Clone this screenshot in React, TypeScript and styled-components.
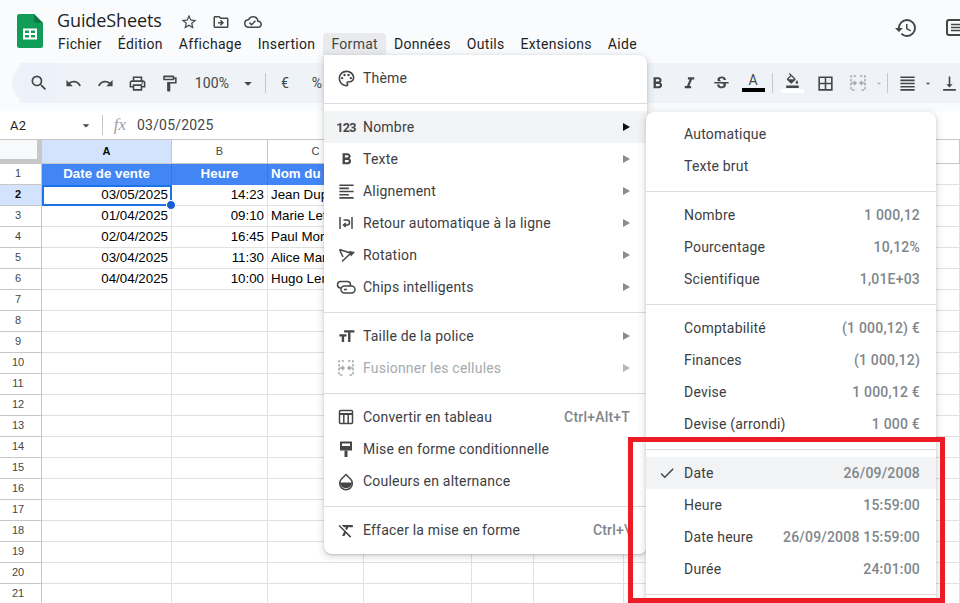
import React from "react";
import styled, { createGlobalStyle } from "styled-components";
import {
  MdSearch,
  MdUndo,
  MdRedo,
  MdOutlinePrint,
  MdOutlineFormatPaint,
  MdFormatBold,
  MdFormatItalic,
  MdStrikethroughS,
  MdOutlineFormatColorFill,
  MdBorderAll,
  MdFormatAlignJustify,
  MdVerticalAlignBottom,
  MdArrowDropDown,
  MdHistory,
  MdStarBorder,
  MdOutlineDriveFileMove,
  MdOutlineCloudDone,
  MdOutlinePalette,
  MdFormatAlignLeft,
  MdFormatSize,
  MdFormatClear,
  MdCheck,
} from "react-icons/md";

const Global = createGlobalStyle`
  html, body { margin: 0; padding: 0; background: #fff; }
  body { font-family: Roboto, "Liberation Sans", sans-serif; }
`;

const Page = styled.div`
  position: relative;
  width: 960px;
  height: 603px;
  overflow: hidden;
  background: #fff;
  display: flex;
  flex-direction: column;
`;

const Top = styled.div`
  background: #f9fbfd;
  height: 111px;
  flex: none;
  display: flex;
  flex-direction: column;
`;

const Header = styled.div`
  height: 63px;
  flex: none;
  display: flex;
`;

const LogoBox = styled.div`
  width: 50px;
  padding: 14px 0 0 17px;
  box-sizing: border-box;
  flex: none;
`;

const TitleCol = styled.div`
  display: flex;
  flex-direction: column;
  flex: 1;
  min-width: 0;
`;

const TitleRow = styled.div`
  display: flex;
  align-items: center;
  height: 33px;
  padding: 10px 0 0 7px;
  box-sizing: border-box;
`;

const Title = styled.div`
  font-family: "Open Sans", sans-serif;
  font-size: 18px;
  color: #1f1f1f;
  width: 116px;
  flex: none;
  letter-spacing: -0.1px;
  margin-top: -3px;
`;

const TitleIcon = styled.span`
  width: 32px;
  flex: none;
  display: flex;
  justify-content: center;
  color: #444746;
  font-size: 18px;
`;

const MenuBar = styled.div`
  display: flex;
  height: 22px;
`;

const MenuTab = styled.div<{ $open?: boolean }>`
  padding: 0 8px;
  line-height: 22px;
  font-size: 14px;
  letter-spacing: 0.3px;
  color: ${(p) => (p.$open ? "#444746" : "#1f1f1f")};
  background: ${(p) => (p.$open ? "#e8eaed" : "transparent")};
  border-radius: 4px 4px 0 0;
`;

const HeaderRight = styled.div`
  display: flex;
  gap: 26px;
  padding: 16px 0 0 0;
  margin-right: -8px;
  flex: none;
  color: #444746;
  font-size: 24px;
`;

const Toolbar = styled.div`
  margin-left: 12px;
  width: 1000px;
  height: 40px;
  flex: none;
  background: #eff3f8;
  border-radius: 20px 0 0 20px;
  display: flex;
  align-items: center;
  padding-left: 8px;
  box-sizing: border-box;
  color: #444746;
`;

const SearchBox = styled.div`
  width: 37px;
  height: 40px;
  background: #edf2fa;
  display: flex;
  align-items: center;
  justify-content: center;
  font-size: 20px;
  flex: none;
`;

const Tool = styled.div<{ $w?: number; $muted?: boolean; $size?: number }>`
  width: ${(p) => p.$w ?? 32}px;
  height: 32px;
  flex: none;
  display: flex;
  align-items: center;
  justify-content: center;
  font-size: ${(p) => p.$size ?? 19}px;
  color: ${(p) => (p.$muted ? "#a8abae" : "#444746")};
`;

const ToolText = styled.div<{ $w: number }>`
  width: ${(p) => p.$w}px;
  flex: none;
  text-align: center;
  font-size: 14px;
  letter-spacing: 0.2px;
  color: #444746;
`;

const ToolSep = styled.div<{ $l?: number; $r?: number }>`
  width: 1px;
  height: 20px;
  background: #c7c7c7;
  flex: none;
  margin: 0 ${(p) => p.$r ?? 3}px 0 ${(p) => p.$l ?? 3}px;
`;

const ToolGap = styled.div`
  width: 308px;
  flex: none;
`;

const Swatch = styled.div<{ $bar: string; $size: number }>`
  display: flex;
  flex-direction: column;
  align-items: center;
  font-size: ${(p) => p.$size}px;
  line-height: 14px;
  height: 20px;
  font-weight: 400;
  &::after {
    content: "";
    display: block;
    flex: none;
    width: 23px;
    height: 4px;
    margin-top: 1px;
    background: ${(p) => p.$bar};
  }
`;

const FormulaBar = styled.div`
  height: 28px;
  flex: none;
  display: flex;
  align-items: center;
  border-bottom: 1px solid #c7c7c7;
  font-size: 14px;
  letter-spacing: 0.2px;
  color: #444746;
`;

const NameBox = styled.div`
  width: 68px;
  padding-left: 10px;
  font-size: 13px;
  color: #1f1f1f;
  flex: none;
`;

const FormulaIcon = styled.span`
  font-family: "Liberation Serif", serif;
  font-style: italic;
  font-size: 17px;
  color: #9aa0a6;
  width: 34px;
  text-align: center;
  flex: none;
`;

const Sheet = styled.div`
  display: grid;
  grid-template-columns: 42px 130px 96px 96px 108px 62px 90px 100px 100px 136px;
  grid-template-rows: 24px;
  grid-auto-rows: 21px;
  font-family: "Liberation Sans", Arial, sans-serif;
  font-size: 13.33px;
  color: #000;
`;

const Corner = styled.div`
  box-sizing: border-box;
  background: #f8f9fa;
  border-right: 5px solid #c7c7c7;
  border-bottom: 5px solid #c7c7c7;
`;

const ColHead = styled.div<{ $active?: boolean }>`
  box-sizing: border-box;
  line-height: 23px;
  text-align: center;
  font-size: 11px;
  color: ${(p) => (p.$active ? "#0b0b0b" : "#444746")};
  font-weight: ${(p) => (p.$active ? 700 : 400)};
  background: ${(p) => (p.$active ? "#d3e3fd" : "#fff")};
  border-right: 1px solid #c7c7c7;
  border-bottom: 1px solid #c7c7c7;
`;

const RowHead = styled.div<{ $active?: boolean }>`
  box-sizing: border-box;
  text-align: center;
  padding-right: 5px;
  line-height: 18px;
  font-size: 11px;
  color: ${(p) => (p.$active ? "#0b0b0b" : "#444746")};
  font-weight: ${(p) => (p.$active ? 700 : 400)};
  background: ${(p) => (p.$active ? "#d3e3fd" : "#fff")};
  border-right: 1px solid #c7c7c7;
  border-bottom: 1px solid #c7c7c7;
`;

const Cell = styled.div<{ $align?: string; $band?: boolean; $selected?: boolean }>`
  position: relative;
  box-sizing: border-box;
  white-space: nowrap;
  overflow: ${(p) => (p.$selected ? "visible" : "hidden")};
  padding: 0 3px;
  line-height: 20px;
  text-align: ${(p) => p.$align ?? "left"};
  border-right: 1px solid #e1e1e1;
  border-bottom: 1px solid #e1e1e1;
  ${(p) =>
    p.$band &&
    `background: #4285f4; color: #fff; font-weight: 700; border-right-color: #3a76d8; border-bottom-color: #4285f4;`}
  ${(p) => p.$selected && `outline: 2px solid #1a73e8; outline-offset: -2px; z-index: 1;`}
`;

const Handle = styled.span`
  position: absolute;
  right: -5px;
  bottom: -5px;
  width: 8px;
  height: 8px;
  border-radius: 50%;
  background: #1a5fd0;
  border: 1px solid #fff;
`;

const Menu = styled.div<{ $left: number; $top: number; $w: number; $h: number; $z: number }>`
  position: absolute;
  left: ${(p) => p.$left}px;
  top: ${(p) => p.$top}px;
  width: ${(p) => p.$w}px;
  height: ${(p) => p.$h}px;
  z-index: ${(p) => p.$z};
  box-sizing: border-box;
  background: #fff;
  border-radius: 0 8px 8px 8px;
  box-shadow: 0 2px 6px 2px rgba(60, 64, 67, 0.15), 0 1px 2px rgba(60, 64, 67, 0.22);
  overflow: hidden;
  font-size: 14px;
  letter-spacing: 0.2px;
`;

const SubMenu = styled(Menu)`
  border-radius: 8px;
`;

const MenuPad = styled.div<{ $top: number }>`
  padding-top: ${(p) => p.$top}px;
`;

const Row = styled.div<{ $active?: boolean; $disabled?: boolean; $inset: number; $right: number }>`
  height: 32px;
  display: flex;
  align-items: center;
  padding: 0 ${(p) => p.$right}px 0 ${(p) => p.$inset}px;
  color: ${(p) => (p.$disabled ? "#a6aaaf" : "#3c4043")};
  background: ${(p) => (p.$active ? "#f1f3f4" : "transparent")};
  white-space: nowrap;
`;

const RowIcon = styled.span<{ $muted?: boolean }>`
  width: 24px;
  height: 24px;
  margin-right: 5px;
  flex: none;
  display: flex;
  align-items: center;
  justify-content: center;
  font-size: 19px;
  color: ${(p) => (p.$muted ? "#a6aaaf" : "#444746")};
`;

const Digits = styled.span`
  font-size: 12.5px;
  font-weight: 700;
  letter-spacing: -0.6px;
  color: #444746;
`;

const RowLabel = styled.span`
  flex: 1;
`;

const Hint = styled.span`
  color: #80868b;
  font-weight: 500;
`;

const Shortcut = styled.span`
  color: #80868b;
  font-weight: 500;
`;

const Arrow = styled.span<{ $dark?: boolean; $muted?: boolean }>`
  width: 0;
  height: 0;
  border-top: 4px solid transparent;
  border-bottom: 4px solid transparent;
  border-left: 7px solid ${(p) => (p.$dark ? "#111" : p.$muted ? "#b4b7ba" : "#8a8d90")};
`;

const Divider = styled.div`
  height: 1px;
  background: #dadce0;
  margin: 9px 0 7px;
`;

const CheckSlot = styled.span`
  width: 24px;
  margin-left: -29px;
  margin-right: 5px;
  flex: none;
  display: flex;
  justify-content: center;
  font-size: 18px;
  color: #444746;
`;

const RedFrame = styled.div`
  position: absolute;
  left: 628px;
  top: 437px;
  width: 317px;
  height: 166px;
  box-sizing: border-box;
  border: 5px solid #ed1c24;
  z-index: 20;
  pointer-events: none;
`;

const SheetsLogo = () => (
  <svg width="26" height="34" viewBox="0 0 26 34">
    <path d="M2.5 0H17l9 9v22.5a2.500 2.500 0 0 1-2.500 2.500h-21A2.500 2.500 0 0 1 0 31.500v-29A2.500 2.500 0 0 1 2.500 0z" fill="#0f9d58" />
    <path d="M17 0l9 9h-6.500A2.500 2.500 0 0 1 17 6.500z" fill="#0b7a44" />
    <path d="M6 14.500h14v11H6z M8 16.500v2.500h4v-2.500z M14 16.500v2.500h4v-2.500z M8 21v2.500h4V21z M14 21v2.500h4V21z" fill="#fff" fillRule="evenodd" />
  </svg>
);

const stroke = { fill: "none", stroke: "currentColor", strokeWidth: 1.5 };

const CommentsIcon = () => (
  <svg width="24" height="24" viewBox="0 0 24 24" fill="none" stroke="currentColor">
    <rect x="3" y="4" width="20" height="15" rx="2" strokeWidth="2" />
    <path d="M7 8.500h14M7 11.500h14M7 14.500h14" strokeWidth="1.500" />
  </svg>
);

const WrapIcon = () => (
  <svg width="20" height="20" viewBox="0 0 20 20" {...stroke}>
    <path d="M4 4v12M16 4v12" />
    <path d="M7.500 7h3.500a2 2 0 0 1 0 5H8M9.800 10l-2.300 2 2.300 2" />
  </svg>
);

const RotationIcon = () => (
  <svg width="20" height="20" viewBox="0 0 20 20" {...stroke}>
    <path d="M3.500 4.500L7 12M3.500 4.500L16 8.500" />
    <path d="M6 16.500L15 8" />
    <path d="M17.500 7.500l-3.500-.5 1.200 3z" fill="currentColor" />
  </svg>
);

const ChipsIcon = () => (
  <svg width="20" height="20" viewBox="0 0 20 20" {...stroke}>
    <rect x="1.500" y="4.500" width="13" height="6.500" rx="3.200" />
    <rect x="5" y="9" width="14" height="7" rx="3.500" fill="#fff" />
    <path d="M8 12.500h3" />
  </svg>
);

const MergeIcon = () => (
  <svg width="20" height="20" viewBox="0 0 20 20" {...stroke} strokeDasharray="2.500 1.500">
    <path d="M8 3H3v14h5M12 3h5v14h-5" />
    <path d="M3 10h5M6 8l2 2-2 2M17 10h-5M14 8l-2 2 2 2" strokeDasharray="none" />
  </svg>
);

const TableIcon = () => (
  <svg width="20" height="20" viewBox="0 0 20 20" {...stroke}>
    <rect x="3.500" y="3.500" width="13" height="13" rx="1" />
    <path d="M3.500 7h13" strokeWidth="2" />
    <path d="M7.800 7v9.500M12.200 7v9.500" />
  </svg>
);

const RollerIcon = () => (
  <svg width="20" height="20" viewBox="0 0 20 20">
    <path d="M4 2.500h12v9H4z" fill="currentColor" />
    <path d="M6 4.500h8v2.500H6z" fill="#fff" />
    <path d="M8.500 11.500h3V18h-3z" fill="currentColor" />
  </svg>
);

const DropIcon = () => (
  <svg width="20" height="20" viewBox="0 0 20 20">
    <path d="M10 3.500l4.500 4.500a6.300 6.300 0 1 1-9 0z" fill="none" stroke="currentColor" strokeWidth="1.500" />
    <path d="M4 11.500h12a6 5.800 0 0 1-12 0z" fill="currentColor" />
  </svg>
);

const tabs = ["Fichier", "Édition", "Affichage", "Insertion", "Format", "Données", "Outils", "Extensions", "Aide"];
const columns = ["A", "B", "C", "D", "E", "F", "G", "H", "I"];

const bodyRows: Record<number, string[]> = {
  1: ["Date de vente", "Heure", "Nom du client", "", ""],
  2: ["03/05/2025", "14:23", "Jean Dupont", "", ""],
  3: ["01/04/2025", "09:10", "Marie Lefèvre", "", ""],
  4: ["02/04/2025", "16:45", "Paul Moreau", "", ""],
  5: ["03/04/2025", "11:30", "Alice Martin", "", ""],
  6: ["04/04/2025", "10:00", "Hugo Leroy", "", ""],
};

type FormatItem = {
  icon: React.ReactNode;
  label: string;
  arrow?: boolean;
  active?: boolean;
  disabled?: boolean;
  shortcut?: string;
};

const formatGroups: FormatItem[][] = [
  [{ icon: <MdOutlinePalette />, label: "Thème" }],
  [
    { icon: <Digits>123</Digits>, label: "Nombre", arrow: true, active: true },
    { icon: <MdFormatBold />, label: "Texte", arrow: true },
    { icon: <MdFormatAlignLeft />, label: "Alignement", arrow: true },
    { icon: <WrapIcon />, label: "Retour automatique à la ligne", arrow: true },
    { icon: <RotationIcon />, label: "Rotation", arrow: true },
    { icon: <ChipsIcon />, label: "Chips intelligents", arrow: true },
  ],
  [
    { icon: <MdFormatSize />, label: "Taille de la police", arrow: true },
    { icon: <MergeIcon />, label: "Fusionner les cellules", arrow: true, disabled: true },
  ],
  [
    { icon: <TableIcon />, label: "Convertir en tableau", shortcut: "Ctrl+Alt+T" },
    { icon: <RollerIcon />, label: "Mise en forme conditionnelle" },
    { icon: <DropIcon />, label: "Couleurs en alternance" },
  ],
  [{ icon: <MdFormatClear />, label: "Effacer la mise en forme", shortcut: "Ctrl+\\" }],
];

type NumberItem = { label: string; hint?: string; checked?: boolean };

const numberGroups: NumberItem[][] = [
  [{ label: "Automatique" }, { label: "Texte brut" }],
  [
    { label: "Nombre", hint: "1 000,12" },
    { label: "Pourcentage", hint: "10,12%" },
    { label: "Scientifique", hint: "1,01E+03" },
  ],
  [
    { label: "Comptabilité", hint: "(1 000,12) €" },
    { label: "Finances", hint: "(1 000,12)" },
    { label: "Devise", hint: "1 000,12 €" },
    { label: "Devise (arrondi)", hint: "1 000 €" },
  ],
  [
    { label: "Date", hint: "26/09/2008", checked: true },
    { label: "Heure", hint: "15:59:00" },
    { label: "Date heure", hint: "26/09/2008 15:59:00" },
    { label: "Durée", hint: "24:01:00" },
  ],
  [],
];

function App() {
  return (
    <Page>
      <Global />
      <Top>
        <Header>
          <LogoBox>
            <SheetsLogo />
          </LogoBox>
          <TitleCol>
            <TitleRow>
              <Title>GuideSheets</Title>
              <TitleIcon>
                <MdStarBorder />
              </TitleIcon>
              <TitleIcon>
                <MdOutlineDriveFileMove />
              </TitleIcon>
              <TitleIcon>
                <MdOutlineCloudDone />
              </TitleIcon>
            </TitleRow>
            <MenuBar>
              {tabs.map((t) => (
                <MenuTab key={t} $open={t === "Format"}>
                  {t}
                </MenuTab>
              ))}
            </MenuBar>
          </TitleCol>
          <HeaderRight>
            <MdHistory />
            <CommentsIcon />
          </HeaderRight>
        </Header>
        <Toolbar>
          <SearchBox>
            <MdSearch />
          </SearchBox>
          <Tool $size={17}><MdUndo /></Tool>
          <Tool $size={17}><MdRedo /></Tool>
          <Tool><MdOutlinePrint /></Tool>
          <Tool><MdOutlineFormatPaint /></Tool>
          <ToolText $w={54}>100%</ToolText>
          <Tool $w={18}><MdArrowDropDown /></Tool>
          <ToolSep $l={8} $r={3} />
          <Tool $size={14}>€</Tool>
          <Tool $size={14}>%</Tool>
          <ToolGap />
          <Tool><MdFormatBold /></Tool>
          <Tool><MdFormatItalic /></Tool>
          <Tool><MdStrikethroughS /></Tool>
          <Tool><Swatch $bar="#000" $size={14}>A</Swatch></Tool>
          <ToolSep />
          <Tool><Swatch $bar="#fff" $size={15}><MdOutlineFormatColorFill /></Swatch></Tool>
          <Tool $w={34}><MdBorderAll /></Tool>
          <Tool $muted><MergeIcon /></Tool>
          <Tool $w={10} $muted><MdArrowDropDown /></Tool>
          <ToolSep />
          <Tool><MdFormatAlignJustify /></Tool>
          <Tool $w={10}><MdArrowDropDown /></Tool>
          <Tool><MdVerticalAlignBottom /></Tool>
        </Toolbar>
      </Top>
      <FormulaBar>
        <NameBox>A2</NameBox>
        <Tool $w={16}><MdArrowDropDown /></Tool>
        <ToolSep $l={8} $r={0} />
        <FormulaIcon>fx</FormulaIcon>
        <span>03/05/2025</span>
      </FormulaBar>
      <Sheet>
        <Corner />
        {columns.map((c) => (
          <ColHead key={c} $active={c === "A"}>{c}</ColHead>
        ))}
        {Array.from({ length: 21 }, (_, i) => i + 1).map((r) => {
          const data = bodyRows[r] ?? [];
          return (
            <React.Fragment key={r}>
              <RowHead $active={r === 2}>{r}</RowHead>
              {columns.map((c, i) => {
                const band = r === 1 && i < 5;
                const align = r === 1 && i < 2 ? "center" : i < 2 ? "right" : "left";
                const selected = r === 2 && i === 0;
                return (
                  <Cell key={c} $band={band} $align={align} $selected={selected}>
                    {data[i]}
                    {selected && <Handle />}
                  </Cell>
                );
              })}
            </React.Fragment>
          );
        })}
      </Sheet>

      <Menu $left={324} $top={55} $w={323} $h={499} $z={5}>
        <MenuPad $top={7}>
          {formatGroups.map((group, g) => (
            <React.Fragment key={g}>
              {g > 0 && <Divider />}
              {group.map((item) => (
                <Row key={item.label} $inset={10} $right={17} $active={item.active} $disabled={item.disabled}>
                  <RowIcon $muted={item.disabled}>{item.icon}</RowIcon>
                  <RowLabel>{item.label}</RowLabel>
                  {item.shortcut && <Shortcut>{item.shortcut}</Shortcut>}
                  {item.arrow && <Arrow $dark={item.active} $muted={item.disabled} />}
                </Row>
              ))}
            </React.Fragment>
          ))}
        </MenuPad>
      </Menu>

      <SubMenu $left={646} $top={112} $w={290} $h={520} $z={6}>
        <MenuPad $top={6}>
          {numberGroups.map((group, g) => (
            <React.Fragment key={g}>
              {g > 0 && <Divider />}
              {group.map((item) => (
                <Row key={item.label} $inset={38} $right={16} $active={item.checked}>
                  {item.checked && (
                    <CheckSlot>
                      <MdCheck />
                    </CheckSlot>
                  )}
                  <RowLabel>{item.label}</RowLabel>
                  {item.hint && <Hint>{item.hint}</Hint>}
                </Row>
              ))}
            </React.Fragment>
          ))}
        </MenuPad>
      </SubMenu>

      <RedFrame />
    </Page>
  );
}

export default App;
